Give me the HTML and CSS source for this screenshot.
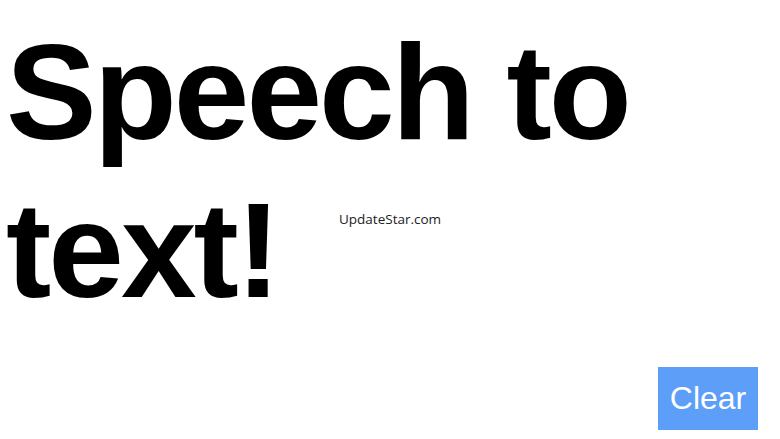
FILE: index.html
```html
<!DOCTYPE html>
<html>
<head>
<meta charset="utf-8">
<link rel="stylesheet" href="styles.css">
</head>
<body>
<div class="page">
  <h1 class="title">Speech to text!</h1>
  <div class="actions">
    <button class="clear">Clear</button>
  </div>
</div>
<div class="watermark">UpdateStar.com</div>
</body>
</html>
```
FILE: styles.css
```css
html, body {
  margin: 0;
  padding: 0;
  background: #fff;
  height: 100%;
}
.page {
  box-sizing: border-box;
  height: 100%;
  display: flex;
  flex-direction: column;
  padding: 0 22px 9px 6px;
}
.title {
  margin: 0;
  padding-top: 13px;
  width: 660px;
  font-family: "Liberation Sans", Arial, sans-serif;
  font-weight: bold;
  font-size: 136px;
  line-height: 158px;
  color: #000;
  letter-spacing: -3px;
}
.actions {
  margin-top: auto;
  display: flex;
  justify-content: flex-end;
}
.clear {
  width: 100px;
  height: 63px;
  border: none;
  background: #5c9ef8;
  color: #fff;
  font-family: "Liberation Sans", Arial, sans-serif;
  font-size: 32px;
  padding: 0;
}
.watermark {
  position: absolute;
  left: 339px;
  top: 210px;
  font-family: "Open Sans", "Noto Sans", sans-serif;
  font-size: 13.5px;
  color: #222;
}
```
